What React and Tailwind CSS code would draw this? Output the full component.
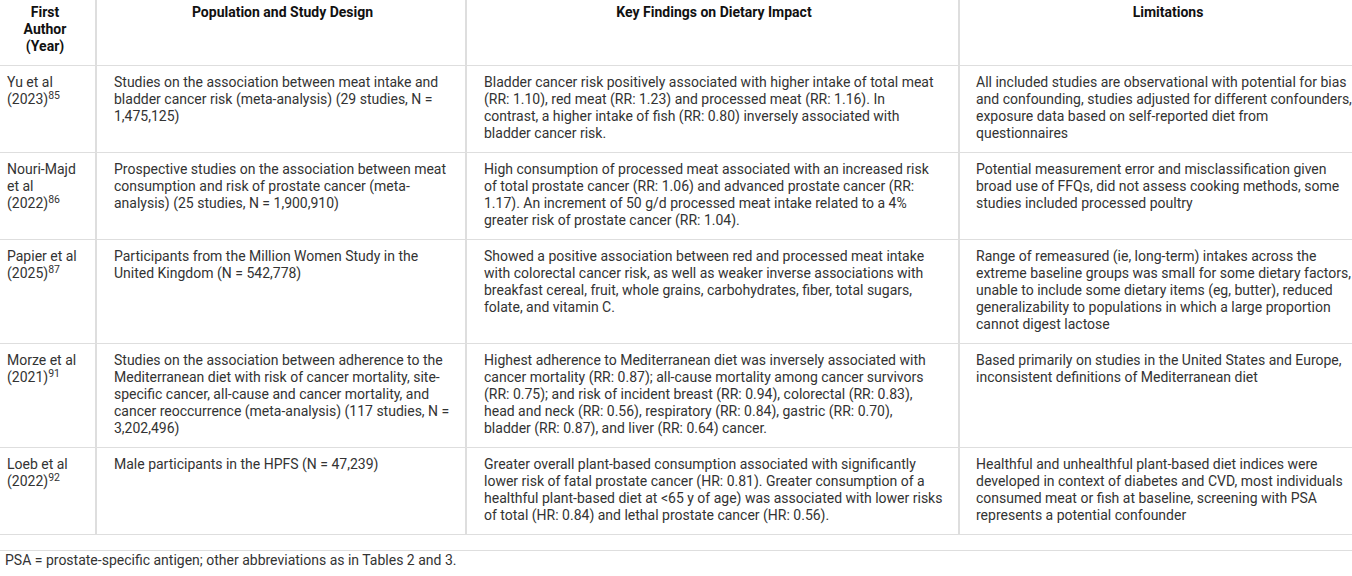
import React from "react";

const rows = [
  {
    a: ["Yu et al", "(2023)", "85"],
    b: "Studies on the association between meat intake and bladder cancer risk (meta-analysis) (29 studies, N = 1,475,125)",
    c: (
      <>
        Bladder cancer risk positively associated with higher intake of total meat (RR: 1.10), red meat (RR: 1.23) and processed meat (RR: 1.16). In
        <br />
        contrast, a higher intake of fish (RR: 0.80) inversely associated with bladder cancer risk.
      </>
    ),
    d: "All included studies are observational with potential for bias and confounding, studies adjusted for different confounders, exposure data based on self-reported diet from questionnaires",
  },
  {
    a: ["Nouri-Majd et al", "(2022)", "86"],
    b: "Prospective studies on the association between meat consumption and risk of prostate cancer (meta-analysis) (25 studies, N = 1,900,910)",
    c: "High consumption of processed meat associated with an increased risk of total prostate cancer (RR: 1.06) and advanced prostate cancer (RR: 1.17). An increment of 50 g/d processed meat intake related to a 4% greater risk of prostate cancer (RR: 1.04).",
    d: "Potential measurement error and misclassification given broad use of FFQs, did not assess cooking methods, some studies included processed poultry",
  },
  {
    a: ["Papier et al", "(2025)", "87"],
    b: "Participants from the Million Women Study in the United Kingdom (N = 542,778)",
    c: "Showed a positive association between red and processed meat intake with colorectal cancer risk, as well as weaker inverse associations with breakfast cereal, fruit, whole grains, carbohydrates, fiber, total sugars, folate, and vitamin C.",
    d: "Range of remeasured (ie, long-term) intakes across the extreme baseline groups was small for some dietary factors, unable to include some dietary items (eg, butter), reduced generalizability to populations in which a large proportion cannot digest lactose",
  },
  {
    a: ["Morze et al", "(2021)", "91"],
    b: "Studies on the association between adherence to the Mediterranean diet with risk of cancer mortality, site-specific cancer, all-cause and cancer mortality, and cancer reoccurrence (meta-analysis) (117 studies, N = 3,202,496)",
    c: (
      <>
        Highest adherence to Mediterranean diet was inversely associated with cancer mortality (RR: 0.87); all-cause mortality among cancer survivors (RR: 0.75); and risk of incident breast (RR: 0.94), colorectal (RR: 0.83), head and neck (RR: 0.56), respiratory (RR: 0.84), gastric (RR: 0.70),
        <br />
        bladder (RR: 0.87), and liver (RR: 0.64) cancer.
      </>
    ),
    d: "Based primarily on studies in the United States and Europe, inconsistent definitions of Mediterranean diet",
  },
  {
    a: ["Loeb et al", "(2022)", "92"],
    b: "Male participants in the HPFS (N = 47,239)",
    c: "Greater overall plant-based consumption associated with significantly lower risk of fatal prostate cancer (HR: 0.81). Greater consumption of a healthful plant-based diet at <65 y of age) was associated with lower risks of total (HR: 0.84) and lethal prostate cancer (HR: 0.56).",
    d: "Healthful and unhealthful plant-based diet indices were developed in context of diabetes and CVD, most individuals consumed meat or fish at baseline, screening with PSA represents a potential confounder",
  },
];

export default function App() {
  const cellBase = "border-b border-[#dedede] pt-[8px] pb-[10px]";
  const headBase = "border-b border-[#dedede] pt-[4px] pb-[10px] font-bold text-[#111] text-center";
  return (
    <div
      className="w-[1352px] h-[576px] overflow-hidden bg-white text-[14px] leading-[17px] text-[#333]"
      style={{ fontFamily: "Roboto, 'Liberation Sans', sans-serif" }}
    >
      <div className="grid w-[1376px] grid-cols-[95px_370px_493px_418px]">
        <div className={`${headBase} pl-[7px] pr-[12px]`}>
          First
          <br />
          Author
          <br />
          (Year)
        </div>
        <div className={`${headBase} border-l-2 border-l-[#dedede] pl-[17px] pr-[14px]`}>
          Population and Study Design
        </div>
        <div className={`${headBase} border-l-2 border-l-[#dedede] pl-[17px] pr-[14px]`}>
          Key Findings on Dietary Impact
        </div>
        <div className={`${headBase} border-l-2 border-l-[#dedede] pl-[16px] pr-[16px]`}>
          Limitations
        </div>
        {rows.map((r, i) => (
          <React.Fragment key={i}>
            <div className={`${cellBase} pl-[7px] pr-[12px]`}>
              {r.a[0]}
              <br />
              {r.a[1]}
              <sup>{r.a[2]}</sup>
            </div>
            <div className={`${cellBase} border-l-2 border-l-[#dedede] pl-[17px] pr-[14px]`}>{r.b}</div>
            <div className={`${cellBase} border-l-2 border-l-[#dedede] pl-[17px] pr-[14px]`}>{r.c}</div>
            <div className={`${cellBase} border-l-2 border-l-[#dedede] pl-[16px] pr-[16px]`}>{r.d}</div>
          </React.Fragment>
        ))}
      </div>
      <div className="mt-[15px] border-t border-[#dedede] pt-[1px] pl-[5px]">
        PSA = prostate-specific antigen; other abbreviations as in Tables 2 and 3.
      </div>
    </div>
  );
}
